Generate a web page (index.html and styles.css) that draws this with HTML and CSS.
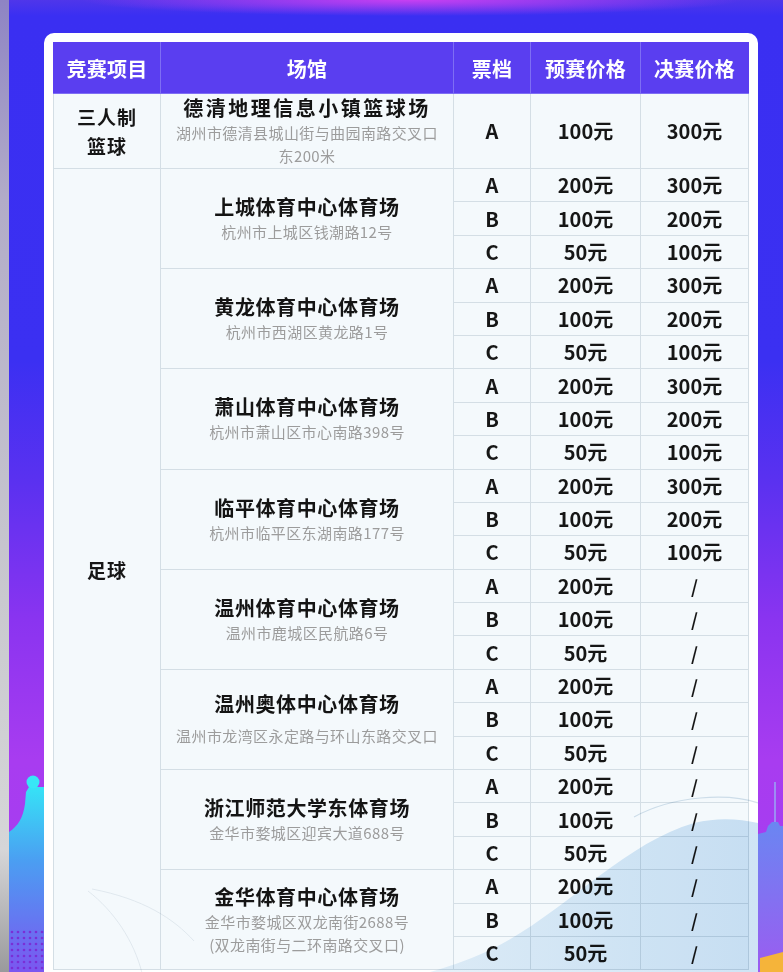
FILE: index.html
```html
<!DOCTYPE html>
<html lang="zh-CN">
<head>
<meta charset="utf-8">
<title>票价表</title>
<link rel="stylesheet" href="styles.css">
</head>
<body>
<div class="page">
  <div class="edge"></div>
  <div class="stage">
    <svg class="deco deco-left" width="35" height="200" viewBox="0 0 35 200" aria-hidden="true">
      <defs>
        <linearGradient id="lg1" x1="0" y1="0" x2="0" y2="1">
          <stop offset="0" stop-color="#36e2f6"/>
          <stop offset="0.4" stop-color="#4b9ef2"/>
          <stop offset="1" stop-color="#7b56f0"/>
        </linearGradient>
      </defs>
      <path d="M0 60 C9 54 14 46 16 32 L17 20 L20 15 L35 15 L35 200 L0 200 Z" fill="url(#lg1)"/>
      <circle cx="24" cy="10" r="6.5" fill="#38e6f6"/>
      <g fill="#7a2fd6">
        <circle cx="3" cy="160" r="1.3"/><circle cx="9" cy="160" r="1.3"/><circle cx="15" cy="160" r="1.3"/><circle cx="21" cy="160" r="1.3"/><circle cx="27" cy="160" r="1.3"/><circle cx="33" cy="160" r="1.3"/>
        <circle cx="3" cy="166" r="1.3"/><circle cx="9" cy="166" r="1.3"/><circle cx="15" cy="166" r="1.3"/><circle cx="21" cy="166" r="1.3"/><circle cx="27" cy="166" r="1.3"/><circle cx="33" cy="166" r="1.3"/>
        <circle cx="3" cy="172" r="1.3"/><circle cx="9" cy="172" r="1.3"/><circle cx="15" cy="172" r="1.3"/><circle cx="21" cy="172" r="1.3"/><circle cx="27" cy="172" r="1.3"/><circle cx="33" cy="172" r="1.3"/>
        <circle cx="3" cy="178" r="1.3"/><circle cx="9" cy="178" r="1.3"/><circle cx="15" cy="178" r="1.3"/><circle cx="21" cy="178" r="1.3"/><circle cx="27" cy="178" r="1.3"/><circle cx="33" cy="178" r="1.3"/>
        <circle cx="3" cy="184" r="1.3"/><circle cx="9" cy="184" r="1.3"/><circle cx="15" cy="184" r="1.3"/><circle cx="21" cy="184" r="1.3"/><circle cx="27" cy="184" r="1.3"/><circle cx="33" cy="184" r="1.3"/>
        <circle cx="3" cy="190" r="1.3"/><circle cx="9" cy="190" r="1.3"/><circle cx="15" cy="190" r="1.3"/><circle cx="21" cy="190" r="1.3"/><circle cx="27" cy="190" r="1.3"/><circle cx="33" cy="190" r="1.3"/>
        <circle cx="3" cy="196" r="1.3"/><circle cx="9" cy="196" r="1.3"/><circle cx="15" cy="196" r="1.3"/><circle cx="21" cy="196" r="1.3"/><circle cx="27" cy="196" r="1.3"/><circle cx="33" cy="196" r="1.3"/>
      </g>
    </svg>
    <svg class="deco deco-right" width="25" height="190" viewBox="0 0 25 190" aria-hidden="true">
      <defs>
        <linearGradient id="lg2" x1="0" y1="0" x2="0" y2="1">
          <stop offset="0" stop-color="#6a86f2"/>
          <stop offset="1" stop-color="#9b5cf0"/>
        </linearGradient>
      </defs>
      <rect x="16" y="0" width="2" height="40" fill="#9d8cf4"/>
      <path d="M0 52 L8 50 L10 44 L14 40 L20 40 L22 44 L25 44 L25 190 L0 190 Z" fill="url(#lg2)"/>
      <path d="M2 176 L25 170 L25 190 L2 190 Z" fill="#f5b43a"/>
    </svg>
    <div class="card">
      <table class="prices">
        <colgroup>
          <col class="c-sport"><col class="c-venue"><col class="c-tier"><col class="c-pre"><col class="c-final">
        </colgroup>
        <thead>
          <tr class="head">
            <th>竞赛项目</th><th>场馆</th><th>票档</th><th>预赛价格</th><th>决赛价格</th>
          </tr>
        </thead>
        <tbody>
          <tr class="row-tall">
            <td class="sport">三人制<br>篮球</td>
            <td class="venue"><div class="name wide">德清地理信息小镇篮球场</div><div class="addr">湖州市德清县城山街与曲园南路交叉口<br>东200米</div></td>
            <td>A</td><td>100元</td><td>300元</td>
          </tr>

          <tr><td class="sport" rowspan="24">足球</td>
            <td class="venue" rowspan="3"><div class="name">上城体育中心体育场</div><div class="addr">杭州市上城区钱潮路12号</div></td>
            <td>A</td><td>200元</td><td>300元</td></tr>
          <tr><td>B</td><td>100元</td><td>200元</td></tr>
          <tr><td>C</td><td>50元</td><td>100元</td></tr>

          <tr><td class="venue" rowspan="3"><div class="name">黄龙体育中心体育场</div><div class="addr">杭州市西湖区黄龙路1号</div></td>
            <td>A</td><td>200元</td><td>300元</td></tr>
          <tr><td>B</td><td>100元</td><td>200元</td></tr>
          <tr><td>C</td><td>50元</td><td>100元</td></tr>

          <tr><td class="venue" rowspan="3"><div class="name">萧山体育中心体育场</div><div class="addr">杭州市萧山区市心南路398号</div></td>
            <td>A</td><td>200元</td><td>300元</td></tr>
          <tr><td>B</td><td>100元</td><td>200元</td></tr>
          <tr><td>C</td><td>50元</td><td>100元</td></tr>

          <tr><td class="venue" rowspan="3"><div class="name">临平体育中心体育场</div><div class="addr">杭州市临平区东湖南路177号</div></td>
            <td>A</td><td>200元</td><td>300元</td></tr>
          <tr><td>B</td><td>100元</td><td>200元</td></tr>
          <tr><td>C</td><td>50元</td><td>100元</td></tr>

          <tr><td class="venue" rowspan="3"><div class="name">温州体育中心体育场</div><div class="addr">温州市鹿城区民航路6号</div></td>
            <td>A</td><td>200元</td><td class="slash">/</td></tr>
          <tr><td>B</td><td>100元</td><td class="slash">/</td></tr>
          <tr><td>C</td><td>50元</td><td class="slash">/</td></tr>

          <tr><td class="venue" rowspan="3"><div class="name">温州奥体中心体育场</div><div class="addr spaced">温州市龙湾区永定路与环山东路交叉口</div></td>
            <td>A</td><td>200元</td><td class="slash">/</td></tr>
          <tr><td>B</td><td>100元</td><td class="slash">/</td></tr>
          <tr><td>C</td><td>50元</td><td class="slash">/</td></tr>

          <tr><td class="venue" rowspan="3"><div class="name">浙江师范大学东体育场</div><div class="addr">金华市婺城区迎宾大道688号</div></td>
            <td>A</td><td>200元</td><td class="slash">/</td></tr>
          <tr><td>B</td><td>100元</td><td class="slash">/</td></tr>
          <tr><td>C</td><td>50元</td><td class="slash">/</td></tr>

          <tr><td class="venue" rowspan="3"><div class="name">金华体育中心体育场</div><div class="addr">金华市婺城区双龙南街2688号<br>(双龙南街与二环南路交叉口)</div></td>
            <td>A</td><td>200元</td><td class="slash">/</td></tr>
          <tr><td>B</td><td>100元</td><td class="slash">/</td></tr>
          <tr><td>C</td><td>50元</td><td class="slash">/</td></tr>
        </tbody>
      </table>
      <svg class="wave" width="714" height="220" viewBox="0 0 714 220" aria-hidden="true">
        <defs>
          <linearGradient id="wv" x1="0" y1="0" x2="1" y2="0">
            <stop offset="0" stop-color="#eef5fa"/>
            <stop offset="0.5" stop-color="#dfedf8"/>
            <stop offset="1" stop-color="#cfe4f5"/>
          </linearGradient>
        </defs>
        <path d="M260 220 C330 215 400 200 450 175 C520 140 580 70 650 50 C675 44 695 46 714 50 L714 220 Z" fill="url(#wv)"/>
        <path d="M590 44 C630 22 685 20 714 30" stroke="#d7e3ec" stroke-width="1.2" fill="none"/>
        <g stroke="#e6eaee" stroke-width="0.8" fill="none">
          <path d="M44 118 C70 138 90 168 98 200"/>
          <path d="M48 116 C100 126 130 146 150 168"/>
        </g>
      </svg>
    </div>
  </div>
</div>
</body>
</html>
```

FILE: styles.css
```css
* { box-sizing: border-box; }

html, body {
  margin: 0;
  padding: 0;
}

body {
  width: 783px;
  height: 972px;
  overflow: hidden;
  font-family: "Noto Sans CJK SC", "Noto Sans", sans-serif;
  color: #161616;
}

.page {
  display: flex;
  width: 783px;
  height: 972px;
  overflow: hidden;
}

.edge {
  flex: 0 0 9px;
  background: linear-gradient(to bottom, #8e84c4 0, #b2acc8 200px, #c9c9cf 600px, #d6d6d8 850px, #9a9a9c 972px);
}

.stage {
  position: relative;
  flex: 1 1 auto;
  padding: 33px 0 0 35px;
  background:
    radial-gradient(ellipse 330px 16px at 52% 0, rgba(206, 64, 242, 0.95), rgba(206, 64, 242, 0) 100%),
    linear-gradient(to bottom, #4f36ea 0, #3a2ff2 16px, #3b30f2 360px, #5a31f0 480px, #8a34f0 620px, #a83cf0 760px, #a43ef0 972px);
}

.deco {
  position: absolute;
  display: block;
}

.deco-left {
  left: 0;
  bottom: 0;
}

.deco-right {
  right: 0;
  bottom: 0;
}

.card {
  position: relative;
  width: 714px;
  height: 960px;
  padding: 9px 10px 0 9px;
  background: #ffffff;
  border-radius: 10px 10px 0 0;
  overflow: hidden;
}

.prices {
  width: 695px;
  table-layout: fixed;
  border-collapse: collapse;
  background: #f4f9fc;
  text-align: center;
}

.c-sport { width: 107px; }
.c-venue { width: 293px; }
.c-tier { width: 77px; }
.c-pre { width: 110px; }
.c-final { width: 108px; }

.head th {
  height: 51px;
  padding: 0;
  background: #5a3ef0;
  color: #ffffff;
  font-size: 20px;
  font-weight: 700;
  letter-spacing: 0.3px;
  border: 1px solid #7e6ef4;
  border-top-color: #5a3ef0;
}

.head th:first-child { border-left-color: #5a3ef0; }
.head th:last-child { border-right-color: #5a3ef0; }

.prices td {
  height: 33.4px;
  padding: 0;
  border: 1px solid #d4dee5;
  font-size: 20px;
  font-weight: 700;
  line-height: 1;
  color: #161616;
}

.prices .row-tall td { height: 75px; }

.prices td.sport {
  font-size: 19px;
  line-height: 29px;
  letter-spacing: 1px;
}

.prices td.venue {
  line-height: 1;
}

.prices td.slash {
  font-size: 18px;
}

.name {
  font-size: 20px;
  line-height: 26px;
  font-weight: 700;
  letter-spacing: 0.6px;
  color: #141414;
}

.name.wide {
  letter-spacing: 2.5px;
}

.addr {
  font-size: 15px;
  line-height: 23px;
  font-weight: 400;
  letter-spacing: 0.4px;
  color: #9c9c9c;
}

.addr.spaced {
  margin-top: 7px;
}

.wave {
  position: absolute;
  left: 0;
  bottom: 0;
  pointer-events: none;
  mix-blend-mode: multiply;
}
```
